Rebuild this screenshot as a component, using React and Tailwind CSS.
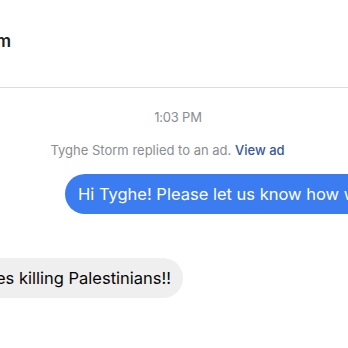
export default function App() {
  return (
    <div
      className="w-[348px] h-[348px] overflow-hidden bg-white flex flex-col"
      style={{ fontFamily: "Inter, 'Liberation Sans', sans-serif" }}
    >
      {/* header, name is cut off on the left */}
      <div className="h-[88px] flex items-center border-b border-[#dcdcdc] shrink-0">
        <div className="w-[11px] flex justify-end whitespace-nowrap pb-[4px]">
          <span className="text-[17px] font-semibold text-[#1c1e21]">Tyghe Storm</span>
        </div>
      </div>

      <div className="flex flex-col">
        <div className="text-center text-[13px] text-[#8a8d91] mt-[20px] leading-[18px] pl-[8px] tracking-[-0.2px]">
          1:03 PM
        </div>
        <div className="text-center text-[13px] text-[#8a8d91] mt-[15px] leading-[18px] pr-[13px]">
          Tyghe Storm replied to an ad.{" "}
          <span className="text-[#385898] font-medium">View ad</span>
        </div>

        <div className="mt-[15px] ml-[65px] flex whitespace-nowrap">
          <div className="bg-[#3b7cf0] text-white text-[16.5px] h-[40px] flex items-center pl-[13px] pr-4 rounded-[20px]">
            Hi Tyghe! Please let us know how we can help you today.
          </div>
        </div>

        <div className="mt-[44px] w-[183px] flex justify-end whitespace-nowrap">
          <div className="bg-[#efefef] text-[#050505] text-[16.5px] h-[40px] flex items-center pl-5 pr-[12px] rounded-[20px]">
            es killing Palestinians!!
          </div>
        </div>
      </div>
    </div>
  );
}
